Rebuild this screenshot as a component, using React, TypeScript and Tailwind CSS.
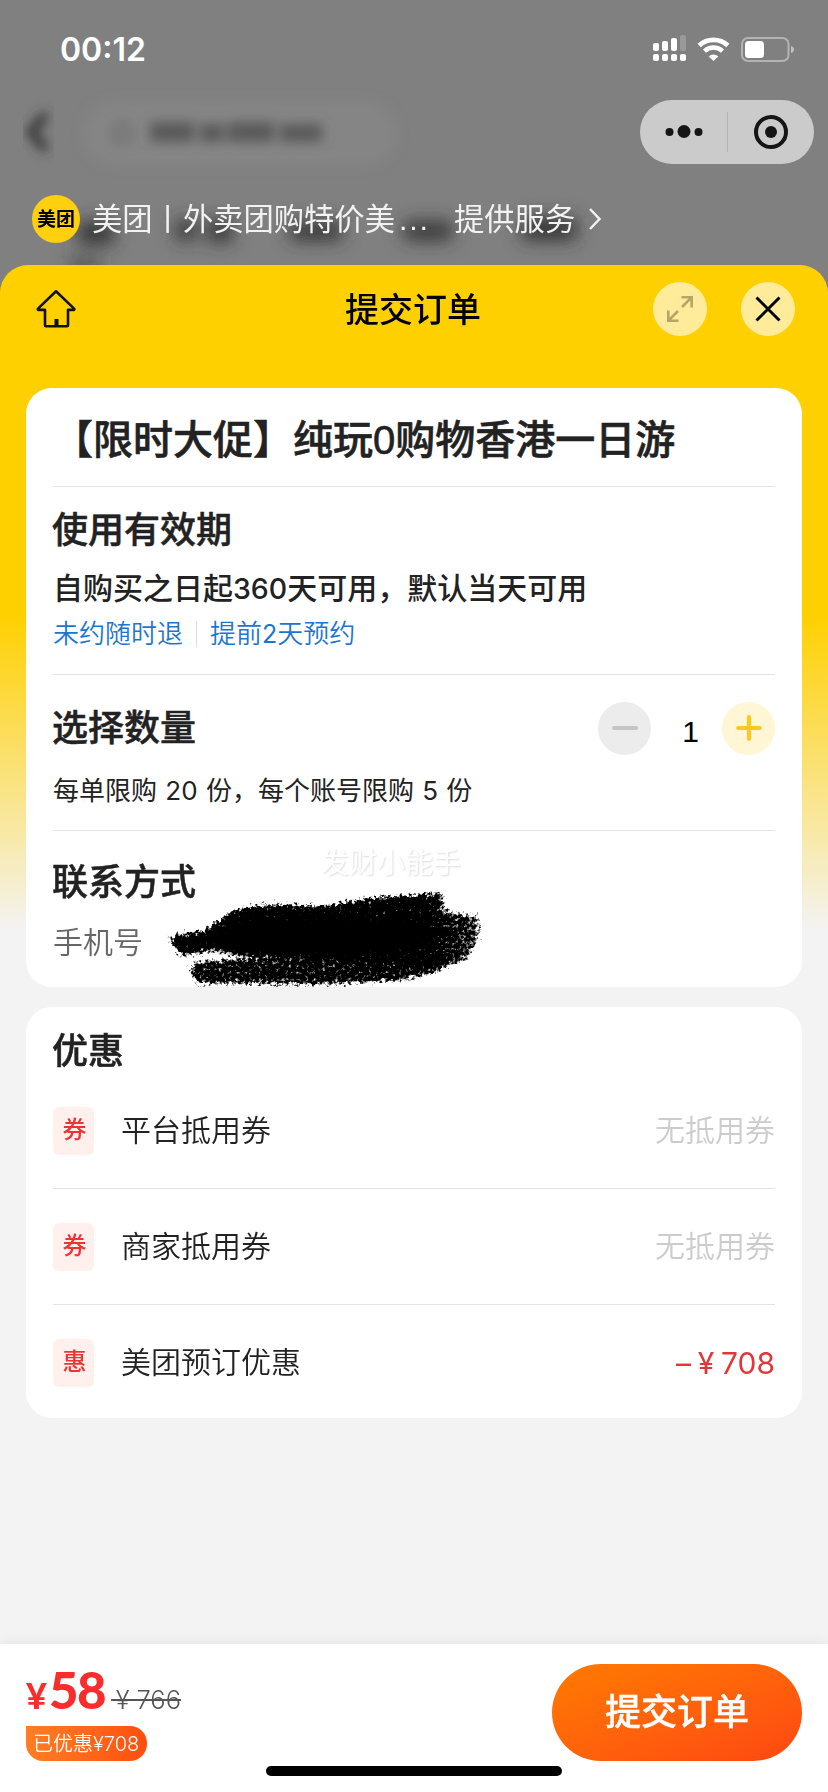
import type { ReactNode } from 'react';

type Discount = { tag: string; label: string; value: ReactNode; active?: boolean };

const discounts: Discount[] = [
  { tag: '券', label: '平台抵用券', value: '无抵用券' },
  { tag: '券', label: '商家抵用券', value: '无抵用券' },
  { tag: '惠', label: '美团预订优惠', value: '708', active: true },
];

function StatusIcons() {
  return (
    <svg width="142" height="28" viewBox="0 0 142 28" fill="#fff">
      <rect x="0" y="8" width="6" height="8" rx="2" />
      <rect x="9" y="6" width="6" height="10" rx="2" />
      <rect x="18" y="3" width="6" height="13" rx="2" />
      <rect x="27" y="0" width="6" height="16" rx="2" opacity="0.2" />
      <rect x="0" y="19" width="6" height="7" rx="2" />
      <rect x="9" y="19" width="6" height="7" rx="2" />
      <rect x="18" y="19" width="6" height="7" rx="2" />
      <rect x="27" y="19" width="6" height="7" rx="2" />
      <path d="M60.500 26l-4.800-4.600a6.800 6.800 0 0 1 9.600 0z" />
      <path d="M51.500 16.100a13.200 13.200 0 0 1 18 0" fill="none" stroke="#fff" strokeWidth="4.400" />
      <path d="M46.200 10.400a21 21 0 0 1 28.600 0" fill="none" stroke="#fff" strokeWidth="4.800" />
      <rect x="89" y="3" width="46.500" height="23" rx="6" fill="none" stroke="#fff" strokeOpacity="0.400" strokeWidth="2" />
      <rect x="92" y="6" width="19" height="17" rx="3.500" />
      <path d="M138 11c4 1 4 6 0 7z" opacity="0.500" />
    </svg>
  );
}

function Capsule() {
  return (
    <svg width="174" height="64" viewBox="0 0 174 64">
      <rect width="174" height="64" rx="32" fill="#cbcbcb" />
      <g fill="#151515">
        <circle cx="29.500" cy="32" r="4" />
        <circle cx="44" cy="31.500" r="6.500" />
        <circle cx="58.500" cy="32" r="4" />
        <circle cx="131" cy="32" r="6" />
      </g>
      <path d="M87.500 12v40" stroke="#b4b4b4" />
      <circle cx="131" cy="32" r="15" fill="none" stroke="#151515" strokeWidth="4" />
    </svg>
  );
}

// Blurred page behind the sheet
function Backdrop() {
  return (
    <svg className="absolute inset-0" width="828" height="300" viewBox="0 0 828 300">
      <defs>
        <filter id="soft" x="-20%" y="-100%" width="140%" height="300%">
          <feGaussianBlur stdDeviation="9" />
        </filter>
        <filter id="softer" x="-50%" y="-150%" width="200%" height="400%">
          <feGaussianBlur stdDeviation="6" />
        </filter>
      </defs>
      <rect x="84" y="102" width="312" height="62" rx="31" fill="#858585" filter="url(#softer)" />
      <path d="M46 114l-15 18 15 18" fill="none" stroke="#343434" strokeWidth="9" filter="url(#softer)" />
      <circle cx="122" cy="133" r="9" fill="none" stroke="#6a6a6a" strokeWidth="4" filter="url(#softer)" />
      <g fill="#5a5a5a" filter="url(#softer)">
        <rect x="150" y="122" width="44" height="20" />
        <rect x="200" y="124" width="24" height="18" />
        <rect x="228" y="122" width="46" height="20" />
        <rect x="280" y="124" width="42" height="18" />
      </g>
      <g fill="#333" filter="url(#soft)">
        <rect x="78" y="222" width="36" height="22" />
        <rect x="176" y="220" width="20" height="20" />
        <rect x="208" y="220" width="24" height="22" />
        <rect x="290" y="222" width="52" height="18" />
        <rect x="404" y="222" width="48" height="18" />
        <rect x="522" y="218" width="54" height="22" />
        <rect x="70" y="258" width="30" height="16" opacity="0.600" />
      </g>
    </svg>
  );
}

function Scribble() {
  return (
    <svg className="absolute left-[96px] top-[54px]" width="350" height="112" viewBox="0 0 350 112">
      <defs>
        <filter id="chalk" x="-5%" y="-10%" width="110%" height="120%">
          <feTurbulence type="fractalNoise" baseFrequency="0.300" numOctaves="3" seed="7" result="noise" />
          <feGaussianBlur in="SourceAlpha" stdDeviation="2.400" result="soft" />
          <feDisplacementMap in="soft" in2="noise" scale="10" xChannelSelector="R" yChannelSelector="G" result="rough" />
          <feComposite in="rough" in2="noise" operator="arithmetic" k1="0" k2="1.500" k3="1.500" k4="-1.350" result="mix" />
          <feComponentTransfer in="mix" result="grain">
            <feFuncA type="linear" slope="1.900" intercept="0" />
          </feComponentTransfer>
          <feFlood floodColor="#000" />
          <feComposite in2="grain" operator="in" />
        </filter>
        <linearGradient id="fade">
          <stop offset="0.820" stopOpacity="0.960" />
          <stop offset="1" stopOpacity="0.680" />
        </linearGradient>
      </defs>
      <path
        d="M18 51L56 45 66 37 83 25 106 20 136 19 171 21 211 14 251 10 295 7 294 25 331 31 331 50 321 73 291 85 220 80 96 73 66 66 31 71Z"
        fill="url(#fade)"
        filter="url(#chalk)"
      />
      <path d="M44 76L96 73 220 70 306 70 291 87 251 96 181 100 48 99 41 88Z" fillOpacity="0.850" filter="url(#chalk)" />
      <path d="M58 56L80 39 110 34 200 33 270 36 290 46 282 60 230 68 150 69 90 67 62 62Z" style={{ filter: 'blur(3px)' }} />
    </svg>
  );
}

function SectionTitle({ children }: { children: ReactNode }) {
  return (
    <h2 className="relative top-px -ml-px text-[36px] font-medium leading-[50px] text-[#222] [-webkit-text-stroke:0.5px_#222]">
      {children}
    </h2>
  );
}

export default function App() {
  return (
    <div className="flex h-[1792px] w-[828px] flex-col overflow-hidden bg-[#808080] font-['Liberation_Sans','Noto_Sans_CJK_SC',sans-serif]">
      <header className="relative h-[265px]">
        <Backdrop />
        <div className="relative flex h-[100px] items-start justify-between pl-[60px] pr-[33px] pt-[35px]">
          <span className="font-['Inter',sans-serif] text-[32px] font-semibold leading-[30px] text-white">00:12</span>
          <StatusIcons />
        </div>
        <div className="relative flex justify-end pr-[14px]">
          <Capsule />
        </div>
        <div className="relative mt-[31px] flex h-12 items-center pl-8 text-[30.300px] text-[#f2f2f2]">
          <span className="flex size-12 items-center justify-center rounded-full bg-[#ffd010] text-[19px] font-bold leading-none text-black">
            美团
          </span>
          <span className="ml-3 w-[362px] whitespace-nowrap pt-0.5">
            美团丨外卖团购特价美<span className="ml-1 tracking-[1.800px]">...</span>
          </span>
          <span className="pt-0.5">提供服务</span>
          <svg className="ml-[13px]" width="14" height="24" viewBox="0 0 14 24" fill="none" stroke="#f2f2f2" strokeWidth="2.500">
            <path d="M2 2l9.500 10L2 22" />
          </svg>
        </div>
      </header>

      <main className="relative flex flex-1 flex-col rounded-t-[28px] bg-[#f3f3f3] bg-[linear-gradient(180deg,#ffd000_0px,#ffd000_350px,#f8e9a8_570px,#f3f3f3_665px)]">
        <div className="flex h-[88px] items-center pl-9 pr-[33px]">
          <svg width="40" height="40" viewBox="0 0 40 40" fill="none" stroke="#111" strokeWidth="2.600" strokeLinejoin="round">
            <path d="M20 2.300L2.300 19.400a.8.8 0 0 0 .6 1.500H9v15.300a1 1 0 0 0 1 1h21a1 1 0 0 0 1-1V20.900h5.200a.8.8 0 0 0 .6-1.500z" />
            <path d="M20.500 37v-7" strokeWidth="4" />
          </svg>
          <h1 className="ml-[269px] w-[300px] pt-0.5 text-[34px] font-medium text-black">提交订单</h1>
          <div className="ml-auto flex gap-[34px]">
            <span className="flex size-[54px] items-center justify-center rounded-full bg-[#ffeb99]">
              <svg width="28" height="28" viewBox="0 0 28 28" fill="none" stroke="#b5a566" strokeWidth="2.600">
                <path d="M15.500 2.300h10.200v10.200M25.500 2.500L16 12M2.300 15.500v10.200h10.200M2.500 25.500L12 16" />
              </svg>
            </span>
            <span className="flex size-[54px] items-center justify-center rounded-full bg-[#ffeb99]">
              <svg width="26" height="26" viewBox="0 0 26 26" fill="none" stroke="#000" strokeWidth="3">
                <path d="M1.500 1.500l23 23M24.500 1.500l-23 23" />
              </svg>
            </span>
          </div>
        </div>

        <section className="relative mx-[26px] mt-[35px] rounded-[26px] bg-white px-[27px]">
          <div className="flex h-[99px] items-center border-b border-[#e3e3e3]">
            <p className="whitespace-nowrap pt-[5px] text-[40px] font-medium leading-[56px] text-[#222] [-webkit-text-stroke:0.6px_#222]">
              【限时大促】纯玩0购物香港一日游
            </p>
          </div>

          <div className="border-b border-[#e3e3e3] pb-[22px] pt-[18px]">
            <SectionTitle>使用有效期</SectionTitle>
            <p className="mt-[13px] text-[30px] font-medium leading-[42px] text-[#222]">
              自购买之日起<span className="font-['Inter'] text-[28.500px]">360</span>天可用，默认当天可用
            </p>
            <div className="mt-1.5 flex items-center text-[26px] font-[350] leading-9 text-[#1c76cf]">
              <span>未约随时退</span>
              <span className="mx-[13px] h-[26px] w-px bg-[#ddd]" />
              <span>
                提前<span className="font-['Inter'] text-[25px] font-normal">2</span>天预约
              </span>
            </div>
          </div>

          <div className="border-b border-[#e3e3e3] pb-[21px] pt-[26px]">
            <div className="flex h-[54px] items-center justify-between">
              <SectionTitle>选择数量</SectionTitle>
              <div className="flex items-center">
                <span className="flex size-[53px] items-center justify-center rounded-full bg-[#ececec]">
                  <span className="h-1 w-[26px] rounded-sm bg-[#c4c4c4]" />
                </span>
                <span className="w-[71px] pl-2 pt-2 text-center text-[30px] leading-[40px] text-black">1</span>
                <span className="flex size-[53px] items-center justify-center rounded-full bg-[#fff6d6]">
                  <svg width="26" height="26" viewBox="0 0 26 26" stroke="#ffc820" strokeWidth="4.200" strokeLinecap="round">
                    <path d="M13 2.200v21.600M2.200 13h21.600" />
                  </svg>
                </span>
              </div>
            </div>
            <p className="mt-[18px] font-['Inter','Noto_Sans_CJK_SC',sans-serif] text-[26px] font-[370] leading-9 text-[#222] [word-spacing:1px]">
              每单限购 20 份，每个账号限购 5 份
            </p>
          </div>

          <div className="relative pb-6 pt-[26px]">
            <SectionTitle>联系方式</SectionTitle>
            <p className="mt-3.5 pt-px text-[30px] font-[350] leading-[41px] text-[#666]">手机号</p>
            <span className="absolute left-[268px] top-[15px] text-[28px] leading-9 text-white [text-shadow:1px_1px_2px_#ddd]">
              发财小能手
            </span>
            <Scribble />
          </div>
        </section>

        <section className="mx-[26px] mt-5 h-[411px] rounded-[26px] bg-white px-[27px] pt-[19px]">
          <SectionTitle>优惠</SectionTitle>
          <ul className="-mt-[3px]">
            {discounts.map((d) => (
              <li key={d.label} className="flex h-[116px] items-center border-b border-[#e3e3e3] text-[30px] font-[350] leading-[42px] last:border-0">
                <span className="flex h-12 w-[41px] items-center justify-center rounded-md bg-[#fff0ed] pb-0.5 pl-0.5 text-[24px] font-medium leading-[34px] text-[#ee3333]">
                  {d.tag}
                </span>
                <span className="ml-[27px] text-[#222]">{d.label}</span>
                {d.active ? (
                  <span className="ml-auto font-['Inter','Noto_Sans_CJK_SC',sans-serif] font-normal text-[#e0373a]">
                    –<span className="inline-block w-[1em] text-center">¥</span>
                    {d.value}
                  </span>
                ) : (
                  <span className="ml-auto text-[#ccc]">{d.value}</span>
                )}
              </li>
            ))}
          </ul>
        </section>

        <footer className="mt-auto flex h-[148px] justify-between bg-white px-[26px] pt-5 shadow-[0_-2px_12px_rgba(0,0,0,0.060)]">
          <div>
            <div className="-mt-[5px] flex h-[67px] items-baseline whitespace-pre font-['Lato',sans-serif] leading-[62px]">
              <span className="text-[36px] font-black text-[#fa2c2c]">¥</span>
              <span className="ml-0.5 text-[51px] font-black tracking-[-1.500px] text-[#fa2c2c]">58</span>
              <span className="ml-1.5 font-['Inter',sans-serif] text-[25.500px] font-light text-[#555] line-through">
                {'\u2009¥\u2009\u200a766'}
              </span>
            </div>
            <span className="flex h-[35px] w-[121px] items-center whitespace-nowrap rounded-[17px] rounded-tl-none bg-linear-to-r from-[#ff7d24] to-[#ff4e0e] pl-[7px] font-['Inter','Noto_Sans_CJK_SC',sans-serif] text-[20px] font-[350] text-white">
              已优惠¥708
            </span>
          </div>
          <button className="h-[97px] w-[250px] rounded-full bg-linear-to-br from-[#ff7a00] to-[#ff4612] text-[36px] font-medium text-white [-webkit-text-stroke:0.4px_#fff]">
            提交订单
          </button>
        </footer>
        <div className="absolute bottom-4 left-[266px] h-[10px] w-[296px] rounded-full bg-black" />
      </main>
    </div>
  );
}
